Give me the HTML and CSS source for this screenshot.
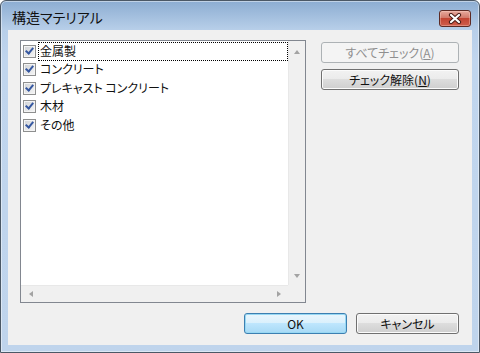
FILE: index.html
```html
<!DOCTYPE html>
<html>
<head>
<meta charset="utf-8">
<title>構造マテリアル</title>
<link rel="stylesheet" href="styles.css">
</head>
<body>
<div class="dlg">
	<div class="caption">
		<span class="title">構造マテリアル</span>
		<button class="close" type="button">
			<svg width="14" height="11" viewBox="0 0 14 11">
				<path d="M3 2 L11 9 M11 2 L3 9" stroke="#4a1c16" stroke-width="4.2" stroke-linecap="round"/>
				<path d="M3 2 L11 9 M11 2 L3 9" stroke="#fff" stroke-width="2.2" stroke-linecap="round"/>
			</svg>
		</button>
	</div>
	<div class="client">
		<div class="top">
			<div class="listbox">
				<ul class="items">
					<li><i class="chk"></i><span class="lbl focus">金属製</span></li>
					<li><i class="chk"></i><span class="lbl">コンクリート</span></li>
					<li><i class="chk"></i><span class="lbl">プレキャスト コンクリート</span></li>
					<li><i class="chk"></i><span class="lbl">木材</span></li>
					<li><i class="chk"></i><span class="lbl">その他</span></li>
				</ul>
				<div class="vscroll"><b class="arr up"></b><b class="arr down"></b></div>
				<div class="hscroll"><b class="arr left"></b><b class="arr right"></b></div>
				<div class="corner"></div>
			</div>
			<div class="side">
				<button class="btn" type="button" disabled>すべてチェック(<u>A</u>)</button>
				<button class="btn" type="button">チェック解除(<u>N</u>)</button>
			</div>
		</div>
		<div class="bottom">
			<button class="btn btn-def" type="button">OK</button>
			<button class="btn" type="button">キャンセル</button>
		</div>
	</div>
</div>
</body>
</html>
```

FILE: styles.css
```css
*{margin:0;padding:0;}
body{font:12px "Noto Sans CJK JP","Noto Sans",sans-serif;font-feature-settings:"palt";color:#000;background:#fff;}

/** 窗口框 **/
.dlg{width:480px;height:353px;box-sizing:border-box;border:1px solid #4b5866;border-radius:6px 6px 0 0;padding:0 7px 7px;display:flex;flex-direction:column;background:linear-gradient(#8cadd2,#b8cfe9 29px,#c1d6ee 60px,#bfd4ec);box-shadow:inset 0 0 0 1px rgba(255,255,255,.45);}
.caption{height:29px;display:flex;justify-content:space-between;align-items:flex-start;}
.title{padding:8px 0 0 4px;font-size:14px;line-height:17px;color:#111;}
.close{width:32px;height:17px;margin:9px 1px 0 0;border:1px solid #5d2b25;border-radius:3px;background:linear-gradient(#e7aa9e,#d27a6b 45%,#c24533 50%,#cf5e4c 100%);box-shadow:inset 0 0 0 1px rgba(255,220,210,.35);display:flex;align-items:center;justify-content:center;}
.close svg{display:block;}

/** 客户区 **/
.client{flex:1;background:#f0f0f0;padding:10px 13px 11px 12px;display:flex;flex-direction:column;}
.top{display:flex;height:263px;}

/** 列表 **/
.listbox{width:286px;height:263px;box-sizing:border-box;border:1px solid #828790;background:#fff;display:grid;grid-template-columns:1fr 17px;grid-template-rows:1fr 17px;}
.items{list-style:none;padding:1px 0 0 2px;overflow:hidden;}
.items li{height:18.5px;display:flex;align-items:center;}
.chk{width:13px;height:13px;box-sizing:border-box;margin-right:2px;border:1px solid #8e8f8f;background:linear-gradient(135deg,#cfd2d6,#f6f6f6) padding-box;box-shadow:inset 0 0 0 1px #f4f4f4;position:relative;}
.chk:after{content:'';position:absolute;left:3px;top:0;width:3px;height:6px;border:solid #3557a0;border-width:0 2px 2px 0;transform:rotate(40deg);}
.lbl{flex:1;height:19px;box-sizing:border-box;line-height:18px;padding:0 2px;white-space:nowrap;color:#111;}
.lbl.focus{outline:1px dotted #000;outline-offset:-1px;}

/** 滚动条 **/
.vscroll,.hscroll,.corner{background:#f0f0f0;}
.vscroll{display:flex;flex-direction:column;justify-content:space-between;align-items:center;padding:9px 0 7px;border-left:1px solid #e8e8e8;}
.hscroll{display:flex;justify-content:space-between;align-items:center;padding:0 7px 0 8px;border-top:1px solid #e8e8e8;}
.arr{width:0;height:0;border:solid transparent;}
.arr.up{border-width:0 3.5px 4px;border-bottom-color:#a3a3a3;}
.arr.down{border-width:4px 3.5px 0;border-top-color:#a3a3a3;}
.arr.left{border-width:3.5px 4px 3.5px 0;border-right-color:#a3a3a3;}
.arr.right{border-width:3.5px 0 3.5px 4px;border-left-color:#a3a3a3;}

/** 按钮 **/
.side{width:138px;margin-left:15px;padding-top:2px;display:flex;flex-direction:column;gap:6px;}
.btn{height:21px;box-sizing:border-box;border:1px solid #707070;border-radius:3px;font:inherit;color:#111;background:linear-gradient(#f2f2f2,#ebebeb 50%,#dddddd 50%,#cfcfcf);box-shadow:inset 0 0 0 1px #fbfbfb;line-height:17px;}
.btn u{text-decoration:underline;}
.btn[disabled]{border-color:#adb2b5;background:#f4f4f4;color:#8f8f8f;box-shadow:none;}
.btn-def{border-color:#3c7fb1;background:linear-gradient(#eaf6fd,#d9f0fc 50%,#bee6fd 50%,#a7d9f5);box-shadow:inset 0 0 0 1px #98d8f3;}
.bottom{display:flex;justify-content:flex-end;gap:9px;margin-top:10px;}
.bottom .btn{width:103px;}
```
